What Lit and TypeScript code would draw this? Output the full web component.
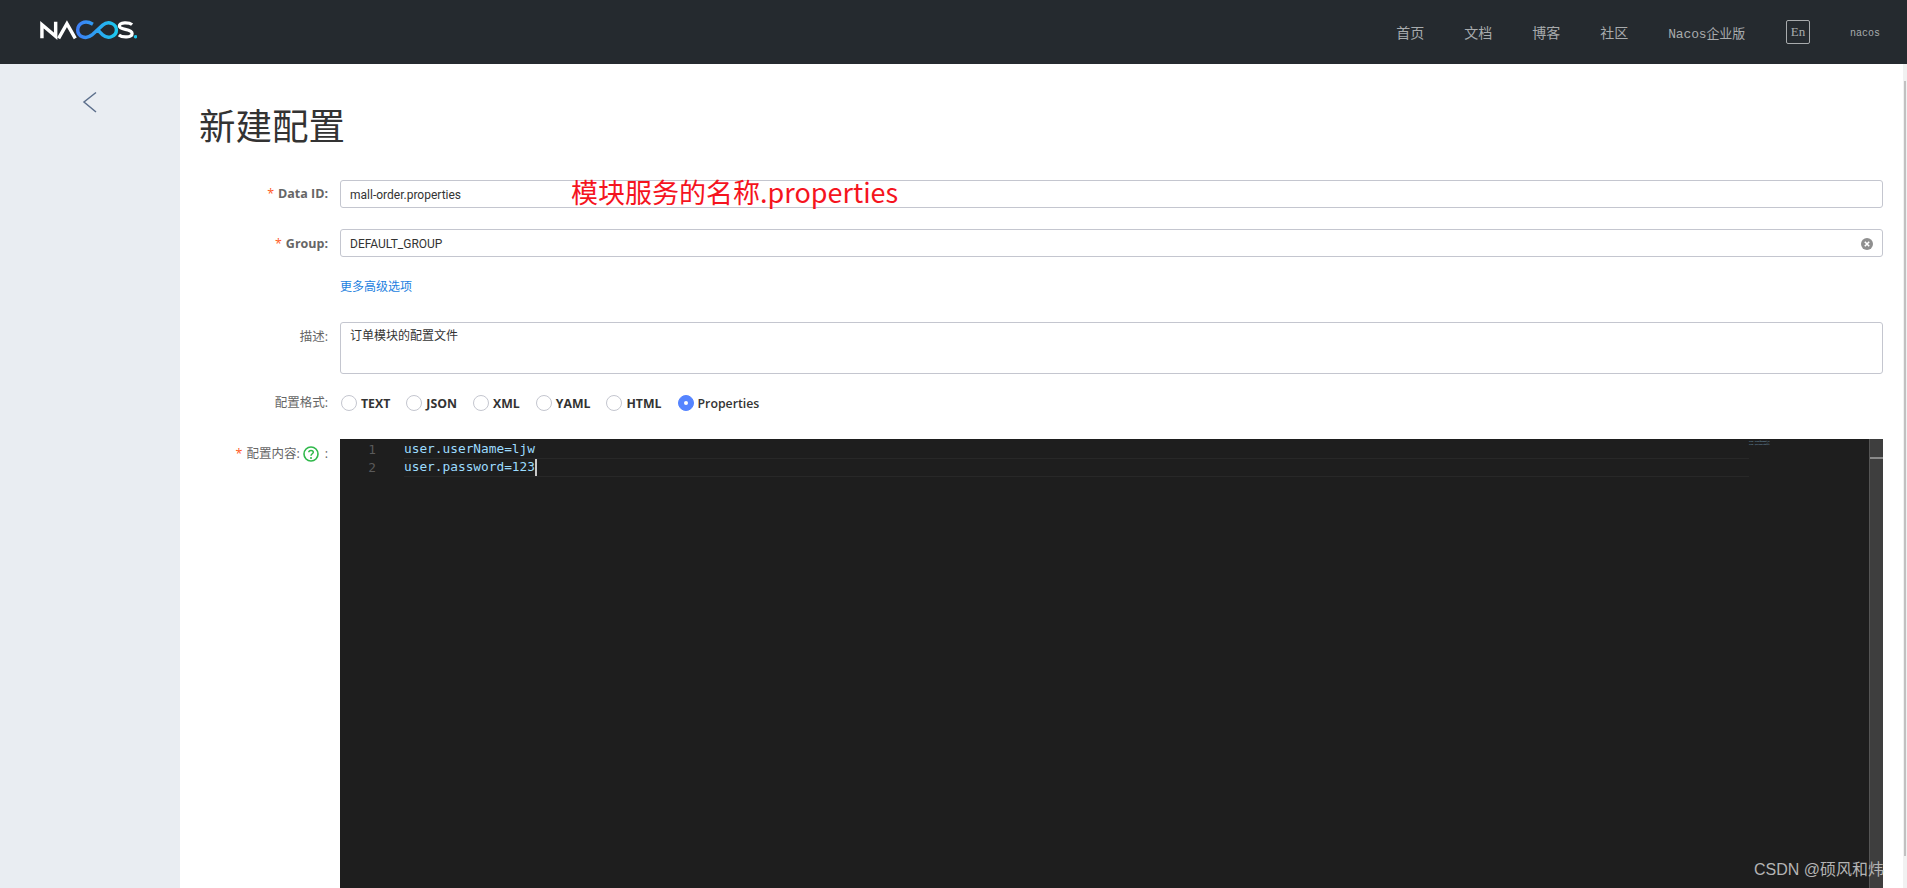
import { LitElement, html, css, svg } from "lit";
import { customElement } from "lit/decorators.js";

const formats = ["TEXT", "JSON", "XML", "YAML", "HTML", "Properties"];

@customElement("app-root")
export class AppRoot extends LitElement {
  static styles = css`
    :host { display: block; width: 1907px; height: 888px; overflow: hidden; position: relative; background: #fff;
      font-family: "Open Sans", "Noto Sans CJK SC", sans-serif; color: #333; }
    .header { height: 64px; background: #252a2f; display: flex; align-items: center; padding-left: 39px; }
    .logo { display: block; margin-top: -2px; }
    .nav { margin-left: auto; display: flex; align-items: center; font-family: "Liberation Mono", "Noto Sans CJK SC", monospace; font-size: 14px; color: #a8abad; padding-right: 27px; }
    .nav span { margin-left: 40px; }
    .nav span.first { margin-left: 0; }
    .nav .wide { margin-left: 40px; font-size: 13px; letter-spacing: -0.15px; white-space: nowrap; }
    .nav .lang { margin-left: 41px; width: 24px; height: 24px; box-sizing: border-box; border: 1px solid #a8abad; border-radius: 2px; display: flex; align-items: center; justify-content: center; font-family: "Liberation Serif", serif; font-size: 13px; }
    .nav .user { margin-left: 40px; margin-top: 2px; font-size: 10px; font-family: "Liberation Mono", monospace; }
    .body { display: flex; height: 824px; }
    .side { width: 180px; background: #e9edf2; flex: none; display: flex; justify-content: center; padding-top: 27px; box-sizing: border-box; }
    .side svg { display: block; }
    .main { flex: 1; padding: 0 20px 0 20px; min-width: 0; }
    .title { margin: 35px 0 0 -1px; font-size: 36.500px; font-weight: 400; line-height: 52px; color: #333; height: 81px; font-family: "Noto Sans CJK SC", sans-serif; white-space: nowrap; }
    .row { display: flex; }
    .label { width: 128px; flex: none; margin-right: 12px; text-align: right; font-size: 12.500px; font-weight: 700; color: #666; line-height: 28px; white-space: nowrap; }
    .label.cn { font-weight: 400; font-size: 12.500px; }
    .label i { color: #ff5a1f; font-style: normal; font-weight: 400; margin-right: 4px; }
    .input { flex: 1; height: 28px; box-sizing: border-box; border: 1px solid #c4c6cf; border-radius: 3px; padding: 1px 8px 0 9px; font-size: 12px; line-height: 26px; color: #333; display: flex; align-items: center; justify-content: space-between; font-family: "Roboto", "Noto Sans CJK SC", sans-serif; }
    .gap1 { margin-top: 21px; height: 28px; }
    .gap1 .label { line-height: 29px; }
    .more { margin: 22px 0 0 140px; font-size: 12px; line-height: 16px; color: #1d7fe0; height: 16px; }
    .area { flex: 1; height: 52px; box-sizing: border-box; border: 1px solid #c4c6cf; border-radius: 3px; padding: 4px 8px 4px 9px; font-size: 12px; line-height: 18px; color: #333; }
    .desc { margin-top: 27px; }
    .desc .label { line-height: 30px; }
    .radios { display: flex; align-items: center; height: 18px; margin-top: 20px; }
    .radio { display: flex; align-items: center; margin-right: 16px; font-size: 12.300px; font-weight: 700; color: #333; }
    .label-row + .radio { margin-left: 1px; }
    .dot { width: 16px; height: 16px; box-sizing: border-box; border: 1px solid #c4c6cf; border-radius: 50%; margin-right: 4px; background: #fff; display: flex; align-items: center; justify-content: center; }
    .on .dot { background: #5584ff; border-color: #5584ff; }
    .on .dot::after { content: ""; width: 4px; height: 4px; border-radius: 50%; background: #fff; }
    .on { font-weight: 600; }
    .label-row { height: 18px; line-height: 18px; }
    .content-row { margin-top: 27px; }
    .content-row .label { line-height: 30px; }
    .help { display: inline-block; vertical-align: -4px; margin: 0 6px 0 3px; }
    .editor { flex: 1; height: 460px; background: #1e1e1e; position: relative; display: flex; font-family: "DejaVu Sans Mono", monospace; font-size: 12.800px; line-height: 18px; color: #9cdcfe; padding-top: 2px; box-sizing: border-box; }
    .gutter { width: 64px; flex: none; color: #5a5a5a; text-align: right; box-sizing: border-box; padding-right: 28px; line-height: 17.500px; }
    .code { width: 1345px; flex: none; }
    .line { height: 17px; line-height: 16px; white-space: nowrap; border-bottom: 1px solid #282828; box-sizing: content-box; }
    .cursor { display: inline-block; width: 2px; height: 17px; background: #c8c8c8; vertical-align: top; }
    .mini { width: 18px; font-size: 2px; line-height: 3px; color: #7fa8c0; flex: none; white-space: nowrap; margin-top: -1px; }
    .sbar { position: absolute; right: 0; top: 0; bottom: 0; width: 14px; background: #3e3e3e; border-left: 1px solid #555; box-sizing: border-box; }
    .sbar::after { content: ""; display: block; height: 2px; margin-top: 18px; background: #8a8a8a; }
    .scroll { width: 4px; background: #f1f1f1; flex: none; padding: 17px 0 0 1px; box-sizing: border-box; }
    .scroll div { height: 775px; background: #c1c1c1; width: 2px; }
    .note { position: absolute; left: 571px; top: 173px; font-size: 27px; line-height: 38px; color: #f5141e; font-family: "Noto Sans CJK SC", sans-serif; white-space: nowrap; }
    .mark { position: absolute; left: 1754px; top: 859px; font-size: 16px; line-height: 22px; color: #b4b4b4; font-family: "Liberation Sans", "Noto Sans CJK SC", sans-serif; white-space: nowrap; }
  `;

  logo() {
    return svg`<svg class="logo" width="98" height="22" viewBox="0 0 100 22" fill="none">
      <defs><linearGradient id="g" x1="0" x2="1" y1="0" y2="0"><stop offset="0" stop-color="#3d7ef5"/><stop offset="1" stop-color="#1cc8ee"/></linearGradient></defs>
      <path d="M3 18.500V4.500L17 16.500V1.500" stroke="#fff" stroke-width="3.500"/>
      <path d="M20 18.500L28.500 3.500L37 18.500" stroke="#fff" stroke-width="3.500"/>
      <path d="M55 4C46 -1 39.500 4 39.500 10C39.500 17 48 20 54 15L65 5C71 0 79 4 79 10C79 16 71 20 65 15L60 10" stroke="url(#g)" stroke-width="3.500"/>
      <path d="M95 4.500C92 2 82 1.500 82 6C82 10.500 95 8 95 13.500C95 18 85 18 81.500 15" stroke="#fff" stroke-width="3.300"/>
      <circle cx="98.500" cy="16.800" r="1.800" fill="#1cc8ee"/>
    </svg>`;
  }

  render() {
    return html`
      <div class="header">
        ${this.logo()}
        <div class="nav">
          <span class="first">首页</span><span>文档</span><span>博客</span><span>社区</span>
          <span class="wide">Nacos企业版</span>
          <span class="lang">En</span>
          <span class="user">nacos</span>
        </div>
      </div>
      <div class="body">
        <div class="side">
          <svg width="16" height="22" viewBox="0 0 16 22" fill="none"><path d="M14 1.500L2 11L14 21" stroke="#5c6f8c" stroke-width="1.500"/></svg>
        </div>
        <div class="main">
          <h1 class="title">新建配置</h1>
          <div class="row">
            <div class="label"><i>*</i>Data ID:</div>
            <div class="input">mall-order.properties</div>
          </div>
          <div class="row gap1">
            <div class="label"><i>*</i>Group:</div>
            <div class="input">DEFAULT_GROUP
              <svg width="14" height="14" viewBox="0 0 14 14"><circle cx="7" cy="7" r="6" fill="#8f8f8f"/><path d="M4.800 4.800L9.200 9.200M9.200 4.800L4.800 9.200" stroke="#fff" stroke-width="1.600"/></svg>
            </div>
          </div>
          <div class="more">更多高级选项</div>
          <div class="row desc">
            <div class="label cn">描述:</div>
            <div class="area">订单模块的配置文件</div>
          </div>
          <div class="row radios">
            <div class="label cn label-row">配置格式:</div>
            ${formats.map((f) => html`<div class="radio ${f === "Properties" ? "on" : ""}"><span class="dot"></span>${f}</div>`)}
          </div>
          <div class="row content-row">
            <div class="label cn"><i>*</i>配置内容:<svg class="help" width="16" height="16" viewBox="0 0 16 16" fill="none"><circle cx="8" cy="8" r="7" stroke="#2fb84a" stroke-width="1.600"/><path d="M5.800 6.200C5.800 3.800 10.300 3.800 10.300 6.200C10.300 7.800 8 7.800 8 9.800" stroke="#2fb84a" stroke-width="1.500"/><circle cx="8" cy="12" r="1" fill="#2fb84a"/></svg>:</div>
            <div class="editor">
              <div class="gutter"><div>1</div><div>2</div></div>
              <div class="code">
                <div class="line">user.userName=ljw</div>
                <div class="line">user.password=123<span class="cursor"></span></div>
              </div>
              <div class="mini">user.userName=ljw<br>user.password=123</div>
              <div class="sbar"></div>
            </div>
          </div>
        </div>
        <div class="scroll"><div></div></div>
      </div>
      <div class="note">模块服务的名称.properties</div>
      <div class="mark">CSDN @硕风和炜</div>
    `;
  }
}
